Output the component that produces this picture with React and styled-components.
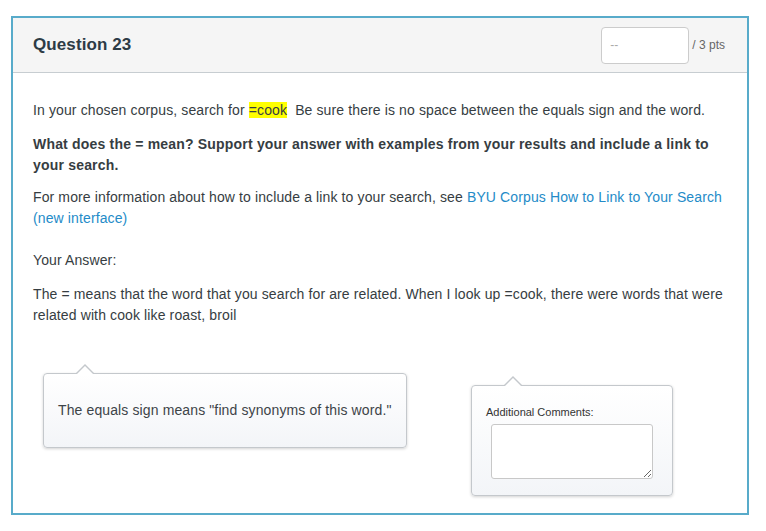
import React from "react";
import styled, { createGlobalStyle } from "styled-components";

const Global = createGlobalStyle`
  html, body { margin: 0; padding: 0; background: #fff; }
  body { font-family: "Liberation Sans", Arial, sans-serif; color: #2d3b45; }
  * { box-sizing: border-box; }
`;

const Page = styled.div`
  padding: 16px 0 0 11px;
`;

const QuestionCard = styled.div`
  width: 738px;
  border: 2px solid #58abca;
  background: #fff;
`;

const Header = styled.div`
  display: flex;
  align-items: center;
  justify-content: space-between;
  height: 55px;
  padding: 0 22px 0 20px;
  background: #f5f5f5;
  border-bottom: 1px solid #c7cdd1;
`;

const Title = styled.h2`
  margin: 0;
  font-size: 17px;
  font-weight: bold;
  color: #2d3b45;
  letter-spacing: 0.1px;
`;

const Points = styled.div`
  display: flex;
  align-items: center;
  gap: 3px;
  font-size: 12px;
  color: #666;
`;

const PointsInput = styled.input`
  width: 88px;
  height: 37px;
  border: 1px solid #ccc;
  border-radius: 4px;
  background: #fff;
  padding: 0 8px;
  font-family: "Liberation Sans", Arial, sans-serif;
  font-size: 12px;
  color: #999;
  &::placeholder { color: #aaa; }
`;

const Body = styled.div`
  padding: 27px 20px 17px 20px;
  font-size: 14px;
  line-height: 21px;
  letter-spacing: 0.12px;
`;

const Para = styled.p`
  margin: 0 0 ${(p) => (p.$gap ? p.$gap : 13)}px;
  font-weight: ${(p) => (p.$bold ? "bold" : "normal")};
  letter-spacing: ${(p) => (p.$bold ? "0.19px" : "0.12px")};
  color: #363d42;
`;

const Mark = styled.span`
  background: #ffff00;
`;

const Link = styled.a`
  color: #248bc8;
  text-decoration: none;
`;

const Answer = styled.div`
  color: #363d42;
`;

const CommentsRow = styled.div`
  display: flex;
  align-items: flex-start;
  margin-top: 47px;
  padding-left: 10px;
  gap: 64px;
`;

const Bubble = styled.div`
  position: relative;
  width: ${(p) => p.$w}px;
  margin-top: ${(p) => p.$top || 0}px;
  border: 1px solid #c4c8cc;
  border-radius: 4px;
  background: linear-gradient(#ffffff, #f3f5f8);
  box-shadow: 0 1px 3px rgba(0, 0, 0, 0.18);
  &::before,
  &::after {
    content: "";
    position: absolute;
    left: 32px;
    width: 0;
    height: 0;
    border-left: 9px solid transparent;
    border-right: 9px solid transparent;
  }
  &::before {
    top: -10px;
    border-bottom: 9px solid #c4c8cc;
  }
  &::after {
    top: -8px;
    border-bottom: 9px solid #fff;
  }
`;

const BubbleText = styled.div`
  padding: 26px 14px;
  font-size: 14px;
  line-height: 21px;
  letter-spacing: 0.12px;
  white-space: nowrap;
  color: #3d4448;
`;

const CommentBox = styled.div`
  padding: 19px 14px 16px;
`;

const CommentLabel = styled.label`
  display: block;
  font-size: 11px;
  line-height: 15px;
  letter-spacing: 0;
  color: #333;
`;

const CommentArea = styled.textarea`
  display: block;
  width: 162px;
  height: 55px;
  margin: 4px 0 0 5px;
  border: 1px solid #c8c8c8;
  border-radius: 3px;
  background: #fff;
  resize: both;
`;

export default function App() {
  return (
    <>
      <Global />
      <Page>
        <QuestionCard>
          <Header>
            <Title>Question 23</Title>
            <Points>
              <PointsInput placeholder="--" />
              <span>/ 3 pts</span>
            </Points>
          </Header>
          <Body>
            <Para>
              In your chosen corpus, search for <Mark>=cook</Mark>&nbsp; Be sure there is no space between the equals sign and the word.
            </Para>
            <Para $bold $gap={11}>
              What does the = mean? Support your answer with examples from your results and include a link to your search.
            </Para>
            <Para $gap={21}>
              For more information about how to include a link to your search, see{" "}
              <Link href="#">BYU Corpus How to Link to Your Search (new interface)</Link>
            </Para>
            <Para>Your Answer:</Para>
            <Answer>
              The = means that the word that you search for are related. When I look up =cook, there were words that were related with cook like roast, broil
            </Answer>
            <CommentsRow>
              <Bubble $w={364}>
                <BubbleText>The equals sign means "find synonyms of this word."</BubbleText>
              </Bubble>
              <Bubble $w={202} $top={12}>
                <CommentBox>
                  <CommentLabel>Additional Comments:</CommentLabel>
                  <CommentArea />
                </CommentBox>
              </Bubble>
            </CommentsRow>
          </Body>
        </QuestionCard>
      </Page>
    </>
  );
}
